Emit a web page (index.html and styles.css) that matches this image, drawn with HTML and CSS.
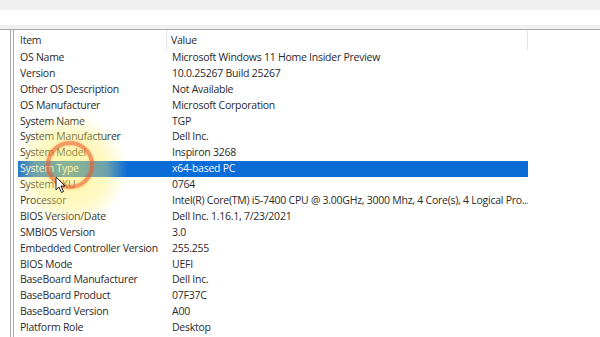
FILE: index.html
```
<!DOCTYPE html>
<html>
<head>
<meta charset="utf-8">
<link rel="stylesheet" href="styles.css">
</head>
<body>
<div class="topbar"></div>
<div class="toolbar"></div>
<div class="strip"></div>
<div class="main">
  <div class="tree"></div>
  <div class="list">
    <div class="header">
      <div class="hcell c1">Item</div>
      <div class="hcell c2">Value</div>
    </div>
    <div class="row"><div class="c1">OS Name</div><div class="c2">Microsoft Windows 11 Home Insider Preview</div></div>
    <div class="row"><div class="c1">Version</div><div class="c2">10.0.25267 Build 25267</div></div>
    <div class="row"><div class="c1">Other OS Description</div><div class="c2">Not Available</div></div>
    <div class="row"><div class="c1">OS Manufacturer</div><div class="c2">Microsoft Corporation</div></div>
    <div class="row"><div class="c1">System Name</div><div class="c2">TGP</div></div>
    <div class="row"><div class="c1">System Manufacturer</div><div class="c2">Dell Inc.</div></div>
    <div class="row"><div class="c1">System Model</div><div class="c2">Inspiron 3268</div></div>
    <div class="row selected"><div class="c1">System Type</div><div class="c2">x64-based PC</div></div>
    <div class="row"><div class="c1">System SKU</div><div class="c2">0764</div></div>
    <div class="row"><div class="c1">Processor</div><div class="c2">Intel(R) Core(TM) i5-7400 CPU @ 3.00GHz, 3000 Mhz, 4 Core(s), 4 Logical Pro...</div></div>
    <div class="row"><div class="c1">BIOS Version/Date</div><div class="c2">Dell Inc. 1.16.1, 7/23/2021</div></div>
    <div class="row"><div class="c1">SMBIOS Version</div><div class="c2">3.0</div></div>
    <div class="row"><div class="c1">Embedded Controller Version</div><div class="c2">255.255</div></div>
    <div class="row"><div class="c1">BIOS Mode</div><div class="c2">UEFI</div></div>
    <div class="row"><div class="c1">BaseBoard Manufacturer</div><div class="c2">Dell Inc.</div></div>
    <div class="row"><div class="c1">BaseBoard Product</div><div class="c2">07F37C</div></div>
    <div class="row"><div class="c1">BaseBoard Version</div><div class="c2">A00</div></div>
    <div class="row"><div class="c1">Platform Role</div><div class="c2">Desktop</div></div>
  </div>
</div>
<div class="glow"></div>
<div class="ring"></div>
<svg class="cursor" width="12" height="18" viewBox="0 0 12 18">
  <path d="M1 1 L1 14 L4 11 L6.5 16.5 L8.5 15.5 L6 10 L10 10 Z" fill="#fff" stroke="#222" stroke-width="1"/>
</svg>
</body>
</html>
```
FILE: styles.css
```
html, body {
  margin: 0;
  padding: 0;
  background: #fff;
  width: 600px;
  height: 337px;
  overflow: hidden;
  font-family: "Open Sans", "Noto Sans", sans-serif;
  font-size: 10.5px;
  letter-spacing: -0.25px;
  color: #2a2a2a;
}
.topbar { height: 10px; background: #f0f0f0; }
.toolbar { height: 15px; background: #fff; }
.strip { height: 4px; background: #f0f0f0; }
.main {
  display: flex;
  border-top: 1px solid #a8a8a8;
  height: 320px;
}
.tree {
  width: 10px;
  border-right: 1px solid #a8a8a8;
  margin-right: 2px;
}
.list {
  flex: 1;
  border-left: 1px solid #a8a8a8;
}
.header {
  display: grid;
  grid-template-columns: 153px 361px;
  height: 20px;
  align-items: center;
}
.hcell { height: 20px; line-height: 20px; }
.header .c1 { padding-left: 6px; border-right: 1px solid #e4e4e4; }
.header .c2 { padding-left: 4px; border-right: 1px solid #e4e4e4; }
.row {
  display: grid;
  grid-template-columns: 149px 361px;
  width: 510px;
  margin-left: 4px;
  height: 15.9px;
  line-height: 15.9px;
  white-space: nowrap;
}
.row .c1 { padding-left: 2px; overflow: hidden; }
.row .c2 { padding-left: 5px; overflow: hidden; }
.row.selected { background: #0a6cd6; color: #f2f6ff; }
.glow {
  position: absolute;
  left: 12px;
  top: 112px;
  width: 116px;
  height: 116px;
  border-radius: 50%;
  background: radial-gradient(circle, rgba(255,240,90,0.55) 0%, rgba(255,240,110,0.4) 45%, rgba(255,250,160,0) 70%);
}
.ring {
  position: absolute;
  left: 46px;
  top: 141px;
  width: 40px;
  height: 40px;
  border-radius: 50%;
  border: 4px solid rgba(235,90,40,0.6);
  box-shadow: 0 0 3px rgba(240,120,40,0.5), inset 0 0 3px rgba(240,120,40,0.5);
}
.cursor {
  position: absolute;
  left: 55px;
  top: 176px;
}
```
